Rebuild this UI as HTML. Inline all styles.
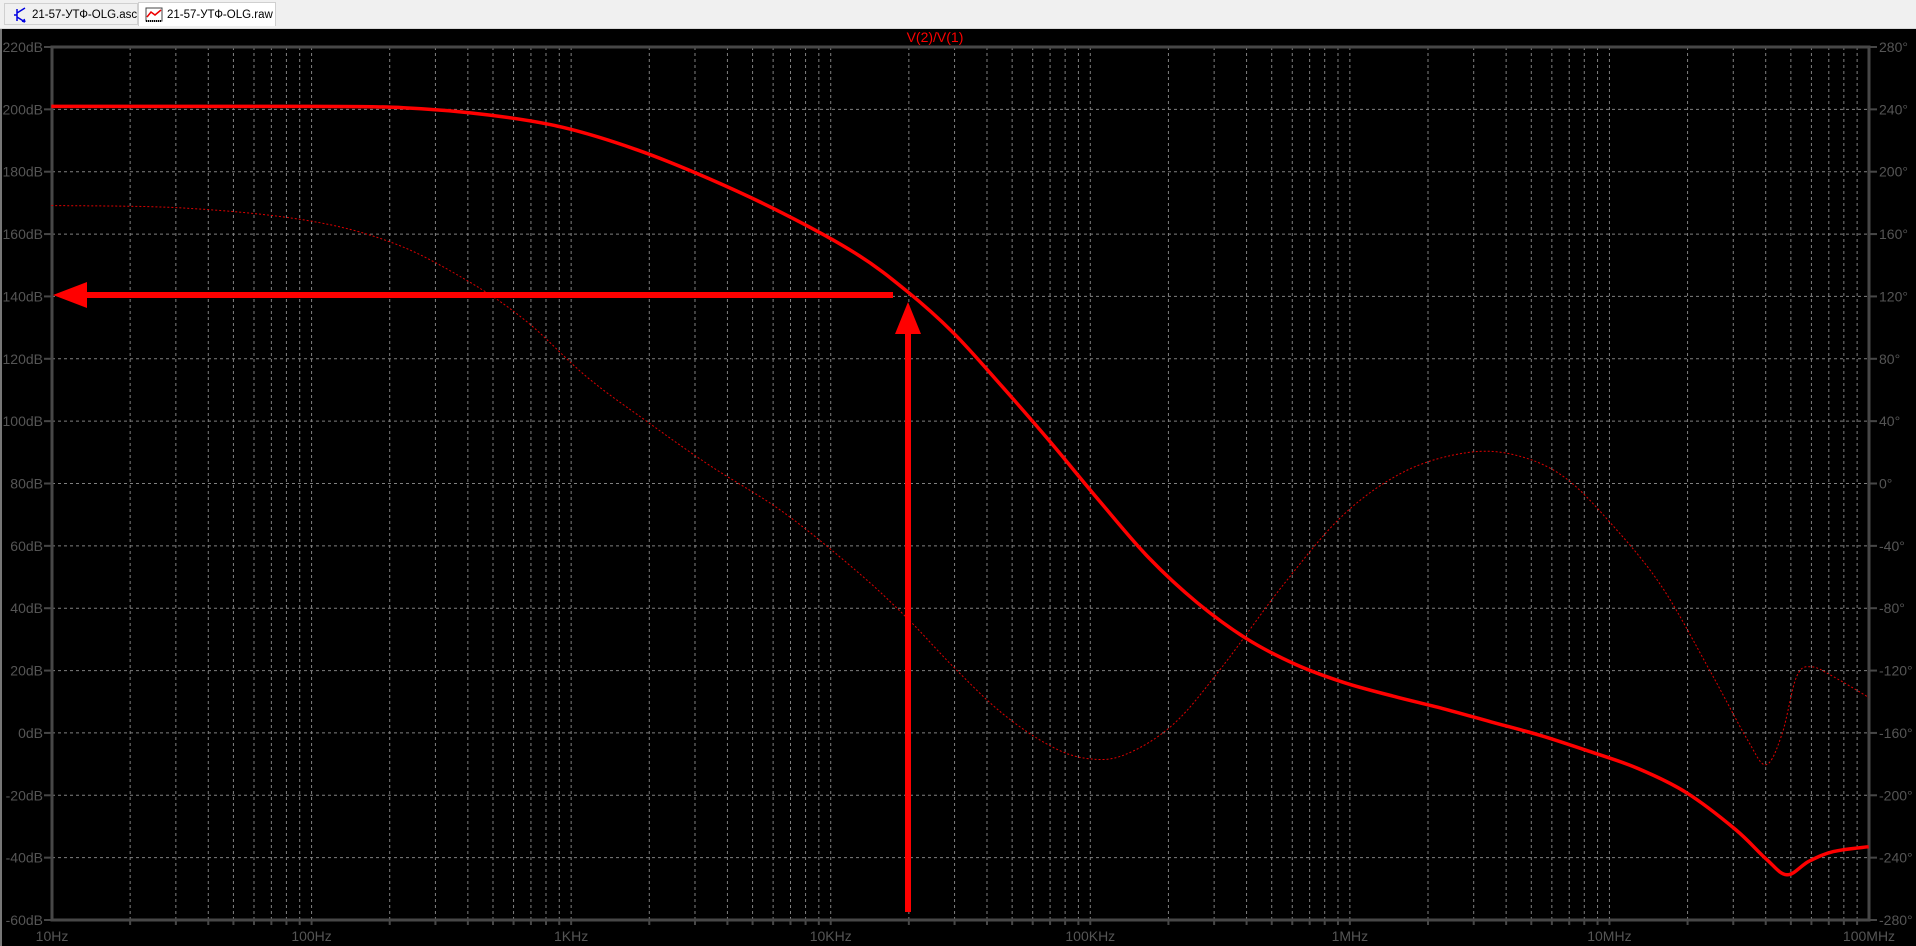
<!DOCTYPE html>
<html><head><meta charset="utf-8">
<style>
html,body{margin:0;padding:0;width:1916px;height:946px;overflow:hidden;background:#000;}
#tabs{position:absolute;left:0;top:0;width:1916px;height:28px;background:#f0f0f0;border-bottom:1px solid #d8d8d8;}
.tab{position:absolute;top:3px;height:22px;font:11.5px "Liberation Sans","Noto Sans CJK SC",sans-serif;color:#000;line-height:22px;box-sizing:border-box;white-space:nowrap;overflow:hidden;}
#t1{left:4px;width:134px;border:1px solid #d0d0d0;background:#f0f0f0;padding-left:27px;}
#t2{left:138px;width:138px;top:2px;height:24px;background:#fff;border:1px solid #d0d0d0;border-bottom:none;padding-left:28px;line-height:24px;}
.tab svg{position:absolute;}
</style></head><body>
<div id="tabs">
<div class="tab" id="t1"><svg width="16" height="16" style="left:8px;top:3px" viewBox="0 0 16 16"><path d="M4 2V14M4 8H1M4 6L12 1M4 10L12 15M12 15L9 14M12 15L11 12" stroke="#0000e0" stroke-width="1.5" fill="none"/></svg>21-57-УТФ-OLG.asc</div>
<div class="tab" id="t2"><svg width="18" height="16" style="left:6px;top:4px" viewBox="0 0 18 16"><rect x="1" y="1" width="16" height="13" fill="#fff" stroke="#444"/><path d="M2 10L6 5L10 8L16 3" stroke="#e00" stroke-width="1.5" fill="none"/><path d="M1 14H17" stroke="#000" stroke-width="2" stroke-dasharray="1,1"/></svg>21-57-УТФ-OLG.raw</div>
</div>
<svg id="plot" width="1916" height="946" viewBox="0 0 1916 946" style="position:absolute;left:0;top:0"></svg>
<script>
var s=document.getElementById('plot');var h='';
var X0=52,X1=1869,Y0=47,Y1=920,D=(X1-X0)/7,R=(Y1-Y0)/14;
h+='<rect x="0" y="29" width="1916" height="917" fill="#000"/>';
h+='<line x1="1" y1="29" x2="1" y2="946" stroke="#777" stroke-width="2"/>';
for(var d=0;d<7;d++){for(var m=1;m<=9;m++){var x=X0+D*(d+Math.log10(m));if(m==1&&d==0)continue;
h+='<line x1="'+x+'" y1="'+Y0+'" x2="'+x+'" y2="'+Y1+'" stroke="#808080" stroke-width="1" stroke-dasharray="3,3"/>';
h+='<line x1="'+x+'" y1="'+Y1+'" x2="'+x+'" y2="'+(Y1+5)+'" stroke="#474747" stroke-width="2"/>';}}
for(var i=1;i<14;i++){var y=Y0+R*i;h+='<line x1="'+X0+'" y1="'+y+'" x2="'+X1+'" y2="'+y+'" stroke="#808080" stroke-width="1" stroke-dasharray="3,3"/>';}
h+='<rect x="'+X0+'" y="'+Y0+'" width="'+(X1-X0)+'" height="'+(Y1-Y0)+'" fill="none" stroke="#474747" stroke-width="3"/>';
var fs='font-family="Liberation Sans,sans-serif" font-size="14" fill="#555"';
for(var i=0;i<=14;i++){var y=Y0+R*i;var v=220-20*i;var p=280-40*i;
h+='<line x1="'+(X0-8)+'" y1="'+y+'" x2="'+X0+'" y2="'+y+'" stroke="#474747" stroke-width="2"/>';
h+='<line x1="'+X1+'" y1="'+y+'" x2="'+(X1+8)+'" y2="'+y+'" stroke="#474747" stroke-width="2"/>';
h+='<text x="'+(X0-9)+'" y="'+(y+5)+'" text-anchor="end" '+fs+'>'+v+'dB</text>';
h+='<text x="'+(X1+10)+'" y="'+(y+5)+'" '+fs+'>'+p+'°</text>';}
var fl=['10Hz','100Hz','1KHz','10KHz','100KHz','1MHz','10MHz','100MHz'];
for(var d=0;d<8;d++){h+='<text x="'+(X0+D*d)+'" y="941" text-anchor="middle" '+fs+'>'+fl[d]+'</text>';}
h+='<text x="935" y="42" text-anchor="middle" font-family="Liberation Sans,sans-serif" font-size="14" fill="#f00">V(2)/V(1)</text>';
var g=[[42,87],[250,87],[330,88],[400,94],[460,104],[520,122],[580,146],[640,174],[700,207],[742,238],[780,272],[820,316],[860,362],[900,410],[940,456],[980,493],[1020,522],[1060,543],[1100,558],[1140,569],[1180,579],[1220,590],[1260,601],[1300,614],[1340,628],[1380,648],[1420,678],[1445,702],[1462,715],[1480,704],[1500,696],[1529,692]];
var ph=[[42,168],[150,170],[250,180],[320,198],[380,228],[430,262],[480,308],[530,345],[580,380],[640,418],[700,466],[742,505],[780,545],[820,583],[860,610],[890,620],[920,617],[960,592],[1000,545],[1050,478],[1100,420],[1150,385],[1200,370],[1240,372],[1280,390],[1320,430],[1360,480],[1400,550],[1430,605],[1445,625],[1458,600],[1470,553],[1482,545],[1500,553],[1529,570]];
function sp(a){var P=a.map(function(p){return [p[0]*1.2222,p[1]*1.2235]});var d='M'+P[0][0].toFixed(1)+','+P[0][1].toFixed(1);
for(var i=0;i<P.length-1;i++){var p0=P[i-1]||P[i],p1=P[i],p2=P[i+1],p3=P[i+2]||p2;
var c1=[p1[0]+(p2[0]-p0[0])/6,p1[1]+(p2[1]-p0[1])/6],c2=[p2[0]-(p3[0]-p1[0])/6,p2[1]-(p3[1]-p1[1])/6];
d+=' C'+c1[0].toFixed(1)+','+c1[1].toFixed(1)+' '+c2[0].toFixed(1)+','+c2[1].toFixed(1)+' '+p2[0].toFixed(1)+','+p2[1].toFixed(1);}return d;}
h+='<path d="'+sp(ph)+'" fill="none" stroke="#d00" stroke-width="1" stroke-dasharray="2,2"/>';
h+='<path d="'+sp(g)+'" fill="none" stroke="#f00" stroke-width="3.5" stroke-linejoin="round"/>';
h+='<line x1="82" y1="295" x2="893" y2="295" stroke="#f00" stroke-width="6"/>';
h+='<polygon points="53,295 87,282 87,308" fill="#f00"/>';
h+='<line x1="908" y1="912" x2="908" y2="330" stroke="#f00" stroke-width="6"/>';
h+='<polygon points="908,302 895,334 921,334" fill="#f00"/>';
s.innerHTML=h;
</script>
</body></html>
